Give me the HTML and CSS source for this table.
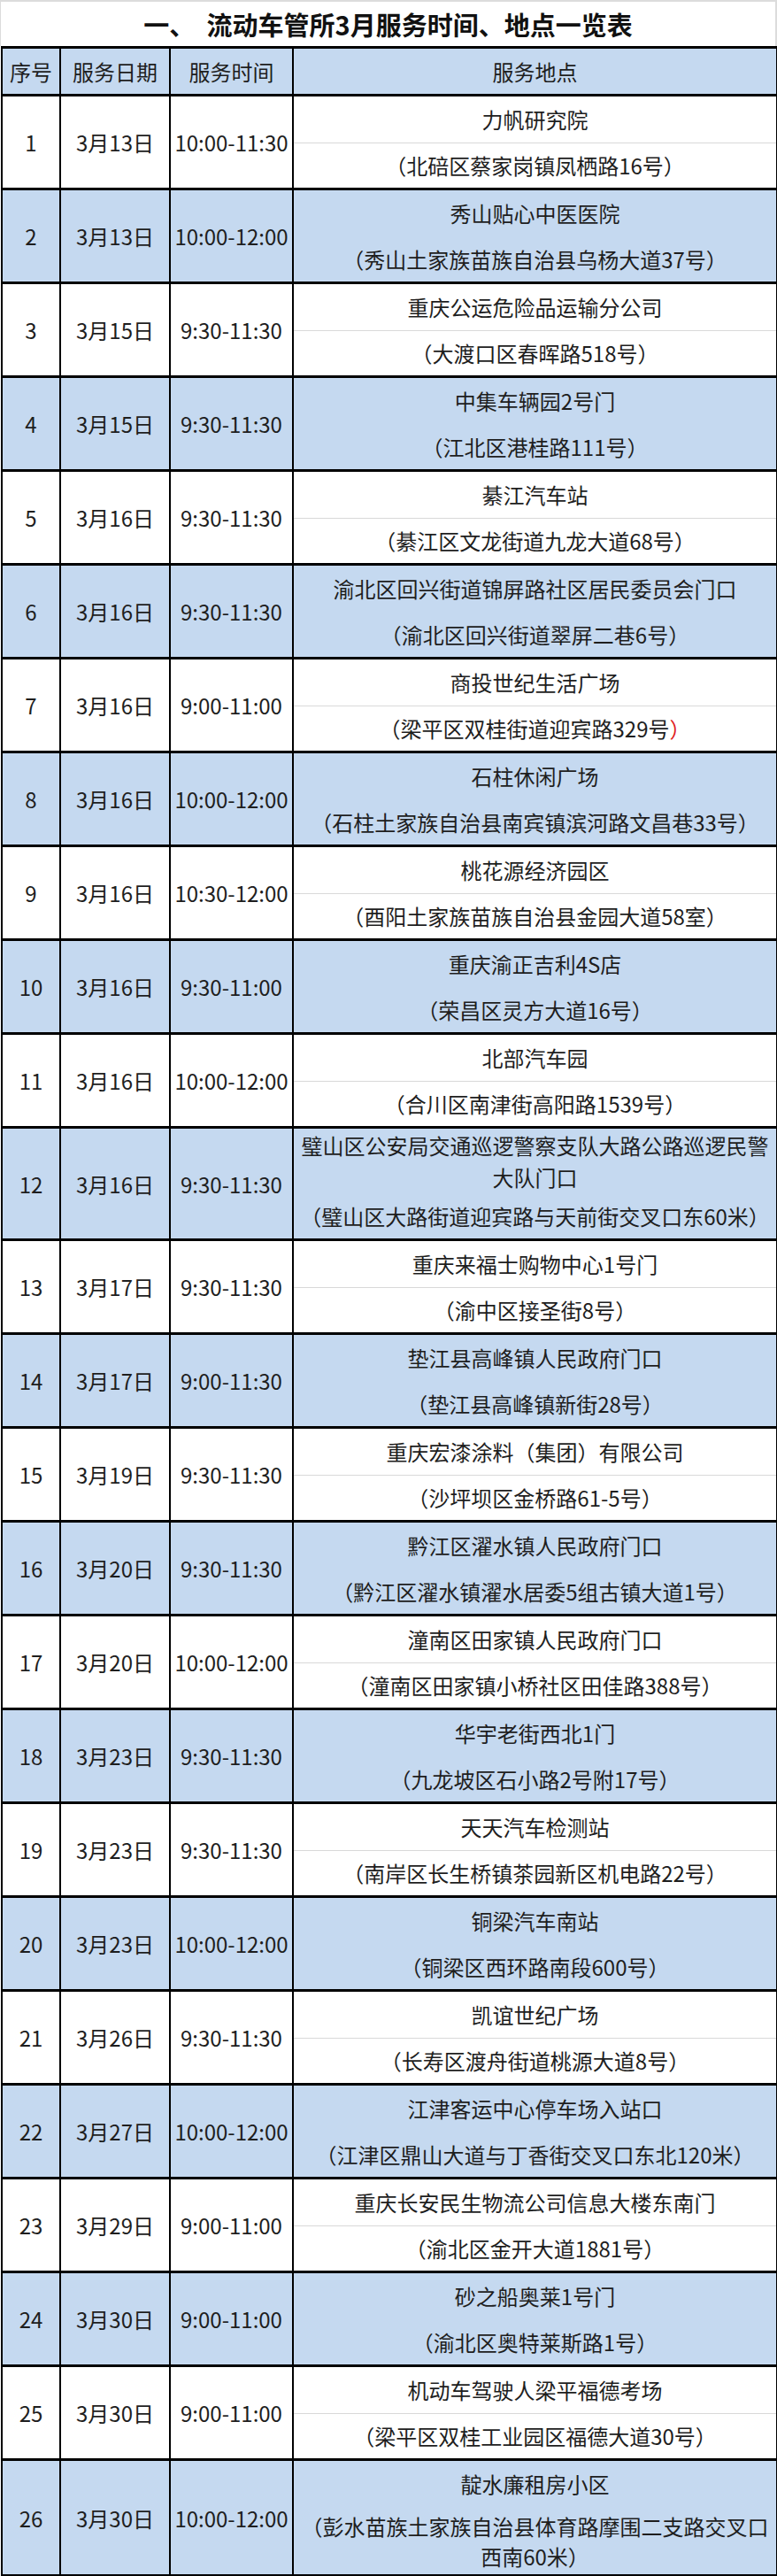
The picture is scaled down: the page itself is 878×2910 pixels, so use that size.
FILE: index.html
```html
<!DOCTYPE html>
<html lang="zh-CN">
<head>
<meta charset="utf-8">
<title>流动车管所3月服务时间、地点一览表</title>
<link rel="stylesheet" href="styles.css">
</head>
<body>
<div class="sheet">
  <h1 class="title">一、&nbsp;&nbsp;流动车管所3月服务时间、地点一览表</h1>
  <table class="grid">
    <colgroup>
      <col class="c-no"><col class="c-date"><col class="c-time"><col class="c-loc">
    </colgroup>
    <thead>
      <tr class="blue"><th>序号</th><th>服务日期</th><th>服务时间</th><th>服务地点</th></tr>
    </thead>
    <tbody>
      <tr><td>1</td><td>3月13日</td><td>10:00-11:30</td><td class="loc"><div class="name">力帆研究院</div><div class="addr">（北碚区蔡家岗镇凤栖路16号）</div></td></tr>
      <tr class="blue"><td>2</td><td>3月13日</td><td>10:00-12:00</td><td class="loc"><div class="name">秀山贴心中医医院</div><div class="addr">（秀山土家族苗族自治县乌杨大道37号）</div></td></tr>
      <tr><td>3</td><td>3月15日</td><td>9:30-11:30</td><td class="loc"><div class="name">重庆公运危险品运输分公司</div><div class="addr">（大渡口区春晖路518号）</div></td></tr>
      <tr class="blue"><td>4</td><td>3月15日</td><td>9:30-11:30</td><td class="loc"><div class="name">中集车辆园2号门</div><div class="addr">（江北区港桂路111号）</div></td></tr>
      <tr><td>5</td><td>3月16日</td><td>9:30-11:30</td><td class="loc"><div class="name">綦江汽车站</div><div class="addr">（綦江区文龙街道九龙大道68号）</div></td></tr>
      <tr class="blue"><td>6</td><td>3月16日</td><td>9:30-11:30</td><td class="loc"><div class="name">渝北区回兴街道锦屏路社区居民委员会门口</div><div class="addr">（渝北区回兴街道翠屏二巷6号）</div></td></tr>
      <tr><td>7</td><td>3月16日</td><td>9:00-11:00</td><td class="loc"><div class="name">商投世纪生活广场</div><div class="addr">（梁平区双桂街道迎宾路329号<span class="red">）</span></div></td></tr>
      <tr class="blue"><td>8</td><td>3月16日</td><td>10:00-12:00</td><td class="loc"><div class="name">石柱休闲广场</div><div class="addr">（石柱土家族自治县南宾镇滨河路文昌巷33号）</div></td></tr>
      <tr><td>9</td><td>3月16日</td><td>10:30-12:00</td><td class="loc"><div class="name">桃花源经济园区</div><div class="addr">（酉阳土家族苗族自治县金园大道58室）</div></td></tr>
      <tr class="blue"><td>10</td><td>3月16日</td><td>9:30-11:00</td><td class="loc"><div class="name">重庆渝正吉利4S店</div><div class="addr">（荣昌区灵方大道16号）</div></td></tr>
      <tr><td>11</td><td>3月16日</td><td>10:00-12:00</td><td class="loc"><div class="name">北部汽车园</div><div class="addr">（合川区南津街高阳路1539号）</div></td></tr>
      <tr class="blue"><td>12</td><td>3月16日</td><td>9:30-11:30</td><td class="loc"><div class="name two">璧山区公安局交通巡逻警察支队大路公路巡逻民警大队门口</div><div class="addr">（璧山区大路街道迎宾路与天前街交叉口东60米）</div></td></tr>
      <tr><td>13</td><td>3月17日</td><td>9:30-11:30</td><td class="loc"><div class="name">重庆来福士购物中心1号门</div><div class="addr">（渝中区接圣街8号）</div></td></tr>
      <tr class="blue"><td>14</td><td>3月17日</td><td>9:00-11:30</td><td class="loc"><div class="name">垫江县高峰镇人民政府门口</div><div class="addr">（垫江县高峰镇新街28号）</div></td></tr>
      <tr><td>15</td><td>3月19日</td><td>9:30-11:30</td><td class="loc"><div class="name">重庆宏漆涂料（集团）有限公司</div><div class="addr">（沙坪坝区金桥路61-5号）</div></td></tr>
      <tr class="blue"><td>16</td><td>3月20日</td><td>9:30-11:30</td><td class="loc"><div class="name">黔江区濯水镇人民政府门口</div><div class="addr">（黔江区濯水镇濯水居委5组古镇大道1号）</div></td></tr>
      <tr><td>17</td><td>3月20日</td><td>10:00-12:00</td><td class="loc"><div class="name">潼南区田家镇人民政府门口</div><div class="addr">（潼南区田家镇小桥社区田佳路388号）</div></td></tr>
      <tr class="blue"><td>18</td><td>3月23日</td><td>9:30-11:30</td><td class="loc"><div class="name">华宇老街西北1门</div><div class="addr">（九龙坡区石小路2号附17号）</div></td></tr>
      <tr><td>19</td><td>3月23日</td><td>9:30-11:30</td><td class="loc"><div class="name">天天汽车检测站</div><div class="addr">（南岸区长生桥镇茶园新区机电路22号）</div></td></tr>
      <tr class="blue"><td>20</td><td>3月23日</td><td>10:00-12:00</td><td class="loc"><div class="name">铜梁汽车南站</div><div class="addr">（铜梁区西环路南段600号）</div></td></tr>
      <tr><td>21</td><td>3月26日</td><td>9:30-11:30</td><td class="loc"><div class="name">凯谊世纪广场</div><div class="addr">（长寿区渡舟街道桃源大道8号）</div></td></tr>
      <tr class="blue"><td>22</td><td>3月27日</td><td>10:00-12:00</td><td class="loc"><div class="name">江津客运中心停车场入站口</div><div class="addr">（江津区鼎山大道与丁香街交叉口东北120米）</div></td></tr>
      <tr><td>23</td><td>3月29日</td><td>9:00-11:00</td><td class="loc"><div class="name">重庆长安民生物流公司信息大楼东南门</div><div class="addr">（渝北区金开大道1881号）</div></td></tr>
      <tr class="blue"><td>24</td><td>3月30日</td><td>9:00-11:00</td><td class="loc"><div class="name">砂之船奥莱1号门</div><div class="addr">（渝北区奥特莱斯路1号）</div></td></tr>
      <tr><td>25</td><td>3月30日</td><td>9:00-11:00</td><td class="loc"><div class="name">机动车驾驶人梁平福德考场</div><div class="addr">（梁平区双桂工业园区福德大道30号）</div></td></tr>
      <tr class="blue"><td>26</td><td>3月30日</td><td>10:00-12:00</td><td class="loc"><div class="name">靛水廉租房小区</div><div class="addr two">（彭水苗族土家族自治县体育路摩围二支路交叉口西南60米）</div></td></tr>
    </tbody>
  </table>
</div>
</body>
</html>
```

FILE: styles.css
```css
html, body {
  margin: 0;
  padding: 0;
  background: #ffffff;
}

body {
  font-family: "Noto Sans CJK SC", "Noto Sans", "Liberation Sans", sans-serif;
  color: #1e1e1e;
}

.sheet {
  width: 878px;
}

.title {
  box-sizing: border-box;
  height: 52px;
  margin: 0;
  border-top: 2px solid #dcdcdc;
  border-left: 1px solid #dcdcdc;
  border-right: 2px solid #dcdcdc;
  font-size: 29px;
  font-weight: 700;
  line-height: 50px;
  text-align: center;
  color: #111111;
}

.grid {
  width: 876px;
  margin-left: 1px;
  border-collapse: collapse;
  table-layout: fixed;
  font-size: 24px;
}

.c-no { width: 66px; }
.c-date { width: 124px; }
.c-time { width: 139px; }
.c-loc { width: 547px; }

.grid th,
.grid td {
  padding: 0;
  border-left: 2px solid #000000;
  border-right: 2px solid #000000;
  border-top: 3px solid #000000;
  border-bottom: 3px solid #000000;
  text-align: center;
  vertical-align: middle;
  font-weight: 400;
  white-space: nowrap;
}

.grid th {
  height: 51px;
  line-height: 51px;
}

.grid td.loc {
  white-space: normal;
}

.blue th,
.blue td {
  background: #c5d9f0;
}

.name {
  height: 52px;
  line-height: 52px;
}

.addr {
  height: 50px;
  line-height: 50px;
  border-top: 1px solid #d9d9d9;
}

.blue .addr {
  border-top-color: transparent;
}

.name.two {
  height: auto;
  line-height: 36px;
  padding-top: 1px;
}

.addr.two {
  height: auto;
  line-height: 34px;
  padding: 4px 0 3px;
}

.red {
  color: #e02020;
}
```
